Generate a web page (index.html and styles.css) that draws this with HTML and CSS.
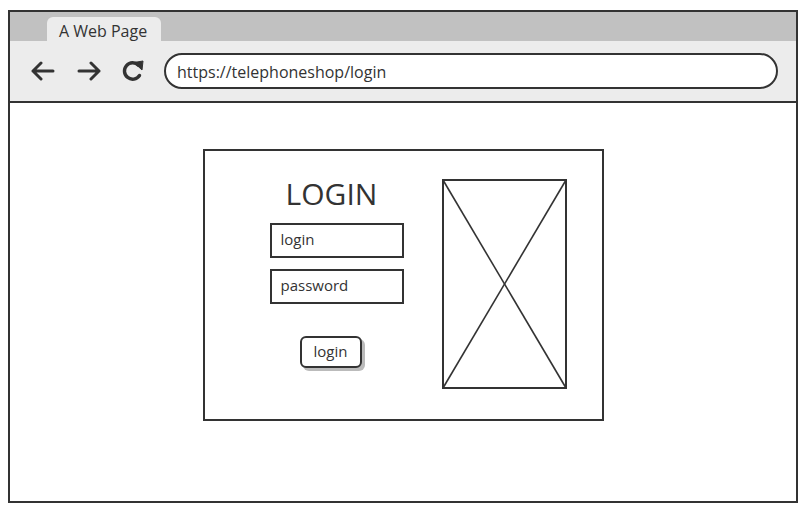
FILE: index.html
```html
<!DOCTYPE html>
<html lang="en">
<head>
    <meta charset="UTF-8">
    <meta name="viewport" content="width=device-width, initial-scale=1.0">
    <title>A Web Page</title>
    <link rel="stylesheet" href="styles.css">
</head>
<body>
    <div class="browser">
        <div class="tab-bar">
            <div class="tab">A Web Page</div>
        </div>
        <div class="toolbar">
            <svg class="nav-icon" width="25" height="20" viewBox="0 0 25 20">
                <path d="M23 10 H3 M11 2 L3 10 L11 18" fill="none" stroke="#333" stroke-width="3" stroke-linecap="round" stroke-linejoin="round"/>
            </svg>
            <svg class="nav-icon" width="25" height="20" viewBox="0 0 25 20">
                <path d="M2 10 H22 M14 2 L22 10 L14 18" fill="none" stroke="#333" stroke-width="3" stroke-linecap="round" stroke-linejoin="round"/>
            </svg>
            <svg class="nav-icon" width="24" height="22" viewBox="0 0 24 22">
                <path d="M17.5 5.2 A8.2 8.2 0 1 0 18.5 15.5" fill="none" stroke="#333" stroke-width="3.4" stroke-linecap="round"/>
                <path d="M13 2.5 L22 1 L21 10 Z" fill="#333" stroke="#333" stroke-width="1" stroke-linejoin="round"/>
            </svg>
            <div class="address">https://telephoneshop/login</div>
        </div>
        <div class="viewport">
            <div class="card">
                <div class="login-form">
                    <h1 class="title">LOGIN</h1>
                    <div class="field">login</div>
                    <div class="field">password</div>
                    <button class="login-button">login</button>
                </div>
                <svg class="placeholder" width="125" height="210" viewBox="0 0 125 210">
                    <rect x="1" y="1" width="123" height="208" fill="none" stroke="#333" stroke-width="2"/>
                    <line x1="1" y1="1" x2="124" y2="209" stroke="#333" stroke-width="1.6"/>
                    <line x1="124" y1="1" x2="1" y2="209" stroke="#333" stroke-width="1.6"/>
                </svg>
            </div>
        </div>
    </div>
</body>
</html>
```

FILE: styles.css
```css
body {
    margin: 0;
    font-family: 'Open Sans', 'Liberation Sans', sans-serif;
    color: #333;
    background: #fff;
}

.browser {
    margin: 10px 0 0 8px;
    width: 790px;
    height: 493px;
    border: 2px solid #333;
    box-sizing: border-box;
    display: flex;
    flex-direction: column;
}

.tab-bar {
    height: 29px;
    background-color: #c1c1c1;
    display: flex;
    align-items: flex-end;
    padding-left: 37px;
}

.tab {
    width: 114px;
    height: 24px;
    box-sizing: border-box;
    padding-left: 12px;
    background-color: #ececec;
    border-radius: 6px 6px 0 0;
    font-size: 16px;
    line-height: 29px;
}

.toolbar {
    height: 60px;
    background-color: #ececec;
    border-bottom: 2px solid #333;
    display: flex;
    align-items: center;
    padding: 0 18px 0 20px;
}

.nav-icon {
    margin-right: 22px;
}

.nav-icon:nth-child(2) {
    margin-right: 19px;
}

.nav-icon:nth-child(3) {
    margin-right: 19px;
}

.address {
    flex: 1;
    height: 36px;
    box-sizing: border-box;
    border: 2px solid #333;
    border-radius: 18px;
    background-color: #fff;
    padding: 2px 0 0 11px;
    font-size: 16px;
    line-height: 31px;
}

.viewport {
    flex: 1;
    display: flex;
    justify-content: center;
    align-items: flex-start;
    padding-top: 46px;
}

.card {
    width: 401px;
    height: 272px;
    box-sizing: border-box;
    border: 2px solid #333;
    display: flex;
    align-items: flex-start;
    padding: 28px 35px 30px 65px;
    gap: 38px;
}

.login-form {
    width: 134px;
    display: flex;
    flex-direction: column;
    align-items: center;
}

.title {
    margin: -3px 10px 11px 0;
    font-size: 30px;
    font-weight: normal;
    line-height: 36px;
}

.field {
    width: 134px;
    height: 35px;
    box-sizing: border-box;
    border: 2px solid #333;
    padding-left: 9px;
    font-size: 15px;
    line-height: 29px;
    margin-bottom: 11px;
}

.login-button {
    margin: 21px 12px 0 0;
    width: 62px;
    height: 32px;
    border: 2px solid #333;
    border-radius: 6px;
    background-color: #fff;
    box-shadow: 3px 3px 0 #bbb;
    font-family: inherit;
    font-size: 15px;
    line-height: 24px;
    color: #333;
    padding: 0 0 3px;
}

.placeholder {
    display: block;
}
```
